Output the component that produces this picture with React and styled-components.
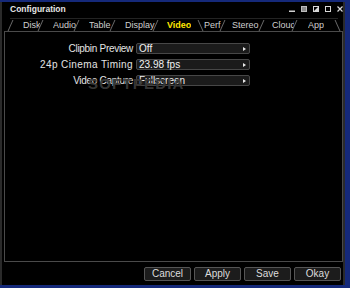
import React from 'react'
import styled, { createGlobalStyle, css } from 'styled-components'

const GlobalStyle = createGlobalStyle`
  html, body {
    margin: 0;
    padding: 0;
    background: #15297a;
  }
  body {
    width: 350px;
    height: 288px;
    overflow: hidden;
    font-family: "Liberation Sans", Arial, sans-serif;
  }
`

const Screen = styled.div`
  width: 350px;
  height: 288px;
  box-sizing: border-box;
  padding-top: 2px;
  background: #15297a;
`

const Window = styled.div`
  width: 345px;
  height: 283px;
  box-sizing: border-box;
  background: #000;
  border-left: 2px solid #2a2a2a;
  border-right: 2px solid #2a2a2a;
  display: flex;
  flex-direction: column;
`

const TitleBar = styled.div`
  height: 16px;
  display: flex;
  align-items: center;
  justify-content: space-between;
  padding: 0 0 2px 8px;
  box-sizing: border-box;
`

const Title = styled.span`
  color: #e6e6e6;
  font-size: 8.5px;
  font-weight: bold;
`

const Controls = styled.div`
  display: flex;
  gap: 6px;
  align-items: center;
`

const ControlIcon = styled.svg`
  width: 6px;
  height: 6px;
  display: block;
`

const TabBar = styled.div`
  height: 13px;
  display: flex;
  padding-left: 8px;
`

const Tab = styled.div`
  position: relative;
  width: ${(p) => p.$width}px;
  height: 13px;
  box-sizing: border-box;
  padding-left: ${(p) => p.$pad}px;
  display: flex;
  align-items: center;
  border-top: 1px solid #232323;

  &::before {
    content: '';
    position: absolute;
    left: 0;
    top: 1px;
    width: 1px;
    height: 11px;
    background: #6a6a6a;
    transform: skewX(${(p) => (p.$back ? '24deg' : '-24deg')});
  }

  ${(p) =>
    p.$last &&
    css`
      &::after {
        content: '';
        position: absolute;
        right: 0;
        top: 1px;
        width: 1px;
        height: 11px;
        background: #6a6a6a;
        transform: skewX(24deg);
      }
    `}
`

const TabLabel = styled.span`
  display: block;
  overflow: hidden;
  white-space: nowrap;
  max-width: ${(p) => p.$max}px;
  font-size: 9px;
  line-height: 11px;
  color: ${(p) => (p.$active ? '#ffe600' : '#cfcfcf')};
  font-weight: ${(p) => (p.$active ? 'bold' : 'normal')};
`

const Panel = styled.div`
  position: relative;
  margin-left: 2px;
  width: 339px;
  height: 231px;
  box-sizing: border-box;
  border: 1px solid #4a4a4a;
  padding-top: 11px;
`

const Form = styled.div`
  display: grid;
  grid-template-columns: 128px 114px;
  grid-auto-rows: 11px;
  column-gap: 3px;
  row-gap: 5px;
`

const Label = styled.div`
  text-align: right;
  color: #e4e4e4;
  font-size: 10px;
  line-height: 11px;
  letter-spacing: ${(p) => p.$spacing}px;
  white-space: nowrap;
`

const Select = styled.div`
  height: 11px;
  box-sizing: border-box;
  border: 1px solid #474747;
  border-radius: 2px;
  background: #1b1b1b;
  display: flex;
  align-items: center;
  justify-content: space-between;
  padding: 0 3px 0 2px;
  color: #f2f2f2;
  font-size: 10px;
  line-height: 9px;
`

const Arrow = styled.span`
  width: 0;
  height: 0;
  border-top: 2.5px solid transparent;
  border-bottom: 2.5px solid transparent;
  border-left: 3px solid #e8e8e8;
`

const Watermark = styled.div`
  position: absolute;
  left: 83px;
  top: 44px;
  font-size: 15px;
  line-height: 15px;
  font-weight: bold;
  letter-spacing: 1.2px;
  color: rgba(140, 140, 140, 0.4);
  text-shadow: 0 0 1px #000;
  pointer-events: none;
`

const Footer = styled.div`
  display: flex;
  justify-content: flex-end;
  gap: 3px;
  padding: 5px 2px 0 0;
`

const Button = styled.button`
  width: 47px;
  height: 14px;
  padding: 0;
  box-sizing: border-box;
  border: 1px solid #555;
  border-radius: 2px;
  background: #1c1c1c;
  color: #dcdcdc;
  font-family: "Liberation Sans", Arial, sans-serif;
  font-size: 10px;
  line-height: 12px;
`

const tabs = [
  { name: 'Disk', width: 30, pad: 13 },
  { name: 'Audio', width: 36, pad: 13 },
  { name: 'Table', width: 36, pad: 13 },
  { name: 'Display', width: 43, pad: 13 },
  { name: 'Video', width: 45, pad: 12, active: true },
  { name: 'Perf', width: 22, pad: 4, back: true },
  { name: 'Stereo', width: 39, pad: 10 },
  { name: 'Cloud', width: 33, pad: 11 },
  { name: 'App', width: 44, pad: 14, last: true },
]

const rows = [
  { label: 'Clipbin Preview', value: 'Off', spacing: -0.3 },
  { label: '24p Cinema Timing', value: '23.98 fps', spacing: 0.4 },
  { label: 'Video Capture', value: 'Fullscreen', spacing: -0.3 },
]

const WindowControls = () => (
  <Controls>
    <ControlIcon viewBox="0 0 6 6">
      <rect x="0" y="4.5" width="6" height="1.5" fill="#d0d0d0" />
    </ControlIcon>
    <ControlIcon viewBox="0 0 6 6">
      <rect x="0.5" y="0.5" width="5" height="5" fill="#8a8a8a" stroke="#bdbdbd" strokeWidth="1" />
    </ControlIcon>
    <ControlIcon viewBox="0 0 6 6">
      <rect x="0.5" y="0.5" width="5" height="5" fill="none" stroke="#d8d8d8" strokeWidth="1" />
      <polygon points="6,0 6,6 0,6" fill="#d8d8d8" />
    </ControlIcon>
    <ControlIcon viewBox="0 0 6 6">
      <rect x="0.5" y="0.5" width="5" height="5" fill="none" stroke="#d8d8d8" strokeWidth="1" />
    </ControlIcon>
    <ControlIcon viewBox="0 0 6 6">
      <path d="M0.5 0.5 L5.5 5.5 M5.5 0.5 L0.5 5.5" stroke="#d8d8d8" strokeWidth="1.2" />
    </ControlIcon>
  </Controls>
)

export default function App() {
  return (
    <Screen>
      <GlobalStyle />
      <Window>
        <TitleBar>
          <Title>Configuration</Title>
          <WindowControls />
        </TitleBar>
        <TabBar>
          {tabs.map((t) => (
            <Tab key={t.name} $width={t.width} $pad={t.pad} $back={t.back} $last={t.last}>
              <TabLabel $active={t.active} $max={t.width - t.pad}>
                {t.name}
              </TabLabel>
            </Tab>
          ))}
        </TabBar>
        <Panel>
          <Form>
            {rows.map((r) => (
              <React.Fragment key={r.label}>
                <Label $spacing={r.spacing}>{r.label}</Label>
                <Select>
                  <span>{r.value}</span>
                  <Arrow />
                </Select>
              </React.Fragment>
            ))}
          </Form>
          <Watermark>SOFTPEDIA</Watermark>
        </Panel>
        <Footer>
          <Button>Cancel</Button>
          <Button>Apply</Button>
          <Button>Save</Button>
          <Button>Okay</Button>
        </Footer>
      </Window>
    </Screen>
  )
}
